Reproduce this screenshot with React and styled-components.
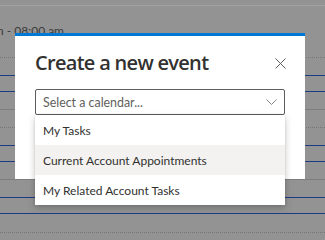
import React from "react";
import styled, { createGlobalStyle } from "styled-components";

const GlobalStyle = createGlobalStyle`
  html, body {
    margin: 0;
    padding: 0;
    width: 325px;
    height: 240px;
    overflow: hidden;
    font-family: Lato, "Open Sans", sans-serif;
  }
`;

const Page = styled.div`
  position: relative;
  width: 325px;
  height: 240px;
  overflow: hidden;
  background: #939393;
`;

const Grid = styled.div`
  display: flex;
  flex-direction: column;
`;

const lineColors = {
  light: "1px solid #a3a3a3",
  solid: "1px solid #7d7d7d",
  dotted: "1px dotted #777777",
  blue: "1px solid #1c3a86",
};

const Row = styled.div`
  box-sizing: border-box;
  height: ${({ $h }) => $h}px;
  border-bottom: ${({ $line }) => lineColors[$line]};
  display: flex;
  align-items: center;
`;

const TimeClip = styled.div`
  width: 64px;
  overflow: hidden;
  display: flex;
  justify-content: flex-end;
  white-space: nowrap;
  font-size: 12px;
  color: #3a3a3a;
  margin-top: -2px;
`;

const Modal = styled.div`
  position: absolute;
  left: 15px;
  top: 33px;
  width: 290px;
  height: 146px;
  box-sizing: border-box;
  background: #ffffff;
  border-top: 3px solid #0078d4;
  padding: 13px 20px 0 20px;
  display: flex;
  flex-direction: column;
`;

const Header = styled.div`
  display: flex;
  align-items: center;
  justify-content: space-between;
  height: 28px;
`;

const Title = styled.h2`
  margin: 0;
  font-family: "Open Sans", sans-serif;
  font-size: 20px;
  font-weight: 600;
  letter-spacing: -0.7px;
  color: #323130;
  line-height: 28px;
`;

const CloseButton = styled.button`
  border: none;
  background: transparent;
  padding: 0;
  width: 12px;
  height: 12px;
  margin-right: -1px;
  display: flex;
  align-items: center;
  justify-content: center;
`;

const SelectWrap = styled.div`
  position: relative;
  margin-top: 12px;
`;

const SelectBox = styled.div`
  box-sizing: border-box;
  height: 26px;
  border: 1px solid #605e5c;
  border-radius: 2px;
  display: flex;
  align-items: center;
  justify-content: space-between;
  padding: 0 6px 0 7px;
`;

const Placeholder = styled.span`
  font-size: 12.4px;
  color: #605e5c;
`;

const Menu = styled.ul`
  position: absolute;
  left: 0;
  right: 0;
  top: 26px;
  margin: 0;
  padding: 0;
  list-style: none;
  background: #ffffff;
  box-shadow: 0 3px 7px rgba(0, 0, 0, 0.22), 0 0 2px rgba(0, 0, 0, 0.12);
`;

const Option = styled.li`
  height: 30px;
  display: flex;
  align-items: center;
  padding: 0 8px;
  font-size: 12px;
  color: #323130;
  background: ${({ $hover }) => ($hover ? "#f3f2f1" : "#ffffff")};
`;

const rows = [
  { h: 6, line: "light" },
  { h: 52, line: "dotted", time: true },
  { h: 18, line: "blue" },
  { h: 16, line: "blue" },
  { h: 18, line: "solid" },
  { h: 18, line: "dotted" },
  { h: 18, line: "blue" },
  { h: 16, line: "blue" },
  { h: 18, line: "solid" },
  { h: 18, line: "blue" },
  { h: 16, line: "blue" },
  { h: 19, line: "dotted" },
];

const options = [
  "My Tasks",
  "Current Account Appointments",
  "My Related Account Tasks",
];

export default function App() {
  return (
    <>
      <GlobalStyle />
      <Page>
        <Grid>
          {rows.map((r, i) => (
            <Row key={i} $h={r.h} $line={r.line}>
              {r.time && <TimeClip>am - 08:00 am</TimeClip>}
            </Row>
          ))}
        </Grid>
        <Modal>
          <Header>
            <Title>Create a new event</Title>
            <CloseButton aria-label="Close">
              <svg width="11" height="11" viewBox="0 0 11 11">
                <path d="M0.5 0.5 L10.5 10.5 M10.5 0.5 L0.5 10.5" stroke="#605e5c" strokeWidth="1" fill="none" />
              </svg>
            </CloseButton>
          </Header>
          <SelectWrap>
            <SelectBox>
              <Placeholder>Select a calendar...</Placeholder>
              <svg width="11" height="6" viewBox="0 0 11 6" style={{ marginRight: 1 }}>
                <path d="M0.5 0.5 L5.5 5.5 L10.5 0.5" stroke="#8a8886" strokeWidth="1" fill="none" />
              </svg>
            </SelectBox>
            <Menu>
              {options.map((o, i) => (
                <Option key={o} $hover={i === 1}>{o}</Option>
              ))}
            </Menu>
          </SelectWrap>
        </Modal>
      </Page>
    </>
  );
}
